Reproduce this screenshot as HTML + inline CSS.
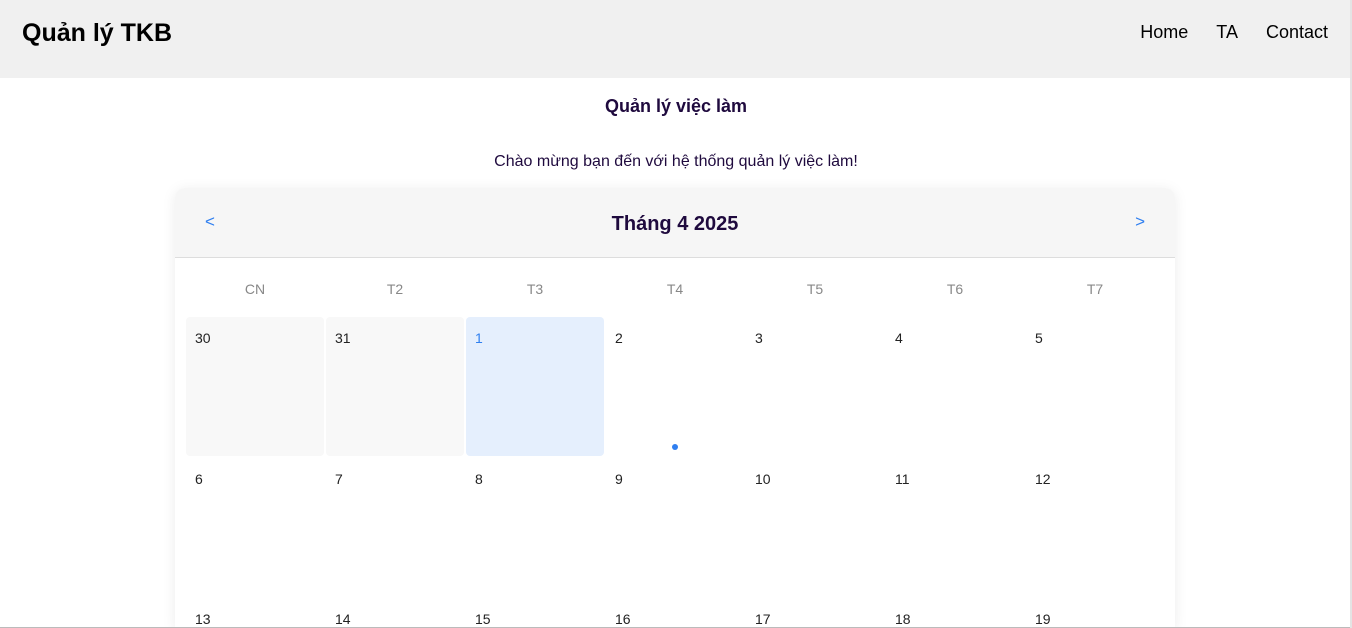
<!DOCTYPE html>
<html><head><meta charset="utf-8"><style>
*{box-sizing:border-box;margin:0;padding:0}
html,body{width:1352px;height:628px;overflow:hidden}
body{background:#fff;font-family:"Liberation Sans",sans-serif;position:relative}
.nav{height:78px;background:#f0f0f0;position:relative}
.logo{position:absolute;left:22px;top:19px;font-size:25px;font-weight:bold;color:#000}
.links{position:absolute;right:24px;top:22px;font-size:18px;color:#000}
.links span{margin-left:28px}
h2{position:absolute;top:96px;width:100%;text-align:center;font-size:18px;color:#1f0a3e;font-weight:bold;left:0}
.welcome{position:absolute;top:153px;width:100%;text-align:center;font-size:16px;color:#1f0a3e}
.card{position:absolute;left:175px;top:188px;width:1000px;height:440px;background:#fff;border-radius:10px 10px 0 0;box-shadow:0 2px 14px rgba(0,0,0,.08);overflow:hidden;font-family:"Liberation Sans",sans-serif}
.head{height:70px;background:#f6f6f6;border-bottom:1px solid #ddd;position:relative}
.head .t{position:absolute;width:100%;text-align:center;top:25px;font-size:20px;color:#1f0a3e;font-weight:600}
.arr{position:absolute;top:24px;color:#2f7ff0;font-size:17px}
.dow{position:absolute;top:93px;font-size:14px;color:#888;width:140px;text-align:center}
.cell{position:absolute;width:138px;height:139px;border-radius:4px;font-size:14px;color:#222;padding:13px 0 0 9px}
</style></head><body>
<div class="nav"><div class="logo">Quản lý TKB</div><div class="links"><span>Home</span><span>TA</span><span>Contact</span></div></div>
<h2>Quản lý việc làm</h2>
<div class="welcome">Chào mừng bạn đến với hệ thống quản lý việc làm!</div>
<div class="card">
<div class="head"><span class="arr" style="left:30px">&lt;</span><div class="t">Tháng 4 2025</div><span class="arr" style="right:30px">&gt;</span></div>
<div class="dow" style="left:10px">CN</div><div class="dow" style="left:150px">T2</div><div class="dow" style="left:290px">T3</div><div class="dow" style="left:430px">T4</div><div class="dow" style="left:570px">T5</div><div class="dow" style="left:710px">T6</div><div class="dow" style="left:850px">T7</div>
<div class="cell" style="left:11px;top:129px;background:#f8f8f8">30</div>
<div class="cell" style="left:151px;top:129px;background:#f8f8f8">31</div>
<div class="cell" style="left:291px;top:129px;background:#e5effd;color:#2f7ff0">1</div>
<div class="cell" style="left:431px;top:129px">2</div>
<div class="cell" style="left:571px;top:129px">3</div>
<div class="cell" style="left:711px;top:129px">4</div>
<div class="cell" style="left:851px;top:129px">5</div>
<div style="position:absolute;left:497px;top:256px;width:6px;height:6px;border-radius:3px;background:#2f7ff0"></div>
<div class="cell" style="left:11px;top:270px">6</div>
<div class="cell" style="left:151px;top:270px">7</div>
<div class="cell" style="left:291px;top:270px">8</div>
<div class="cell" style="left:431px;top:270px">9</div>
<div class="cell" style="left:571px;top:270px">10</div>
<div class="cell" style="left:711px;top:270px">11</div>
<div class="cell" style="left:851px;top:270px">12</div>
<div class="cell" style="left:11px;top:410px;height:30px">13</div>
<div class="cell" style="left:151px;top:410px;height:30px">14</div>
<div class="cell" style="left:291px;top:410px;height:30px">15</div>
<div class="cell" style="left:431px;top:410px;height:30px">16</div>
<div class="cell" style="left:571px;top:410px;height:30px">17</div>
<div class="cell" style="left:711px;top:410px;height:30px">18</div>
<div class="cell" style="left:851px;top:410px;height:30px">19</div>
</div>
<div style="position:absolute;left:0;top:627px;width:1352px;height:1px;background:#bbb"></div>
<div style="position:absolute;left:1350px;top:0;width:2px;height:628px;background:#e4e4e4"></div>
</body></html>
